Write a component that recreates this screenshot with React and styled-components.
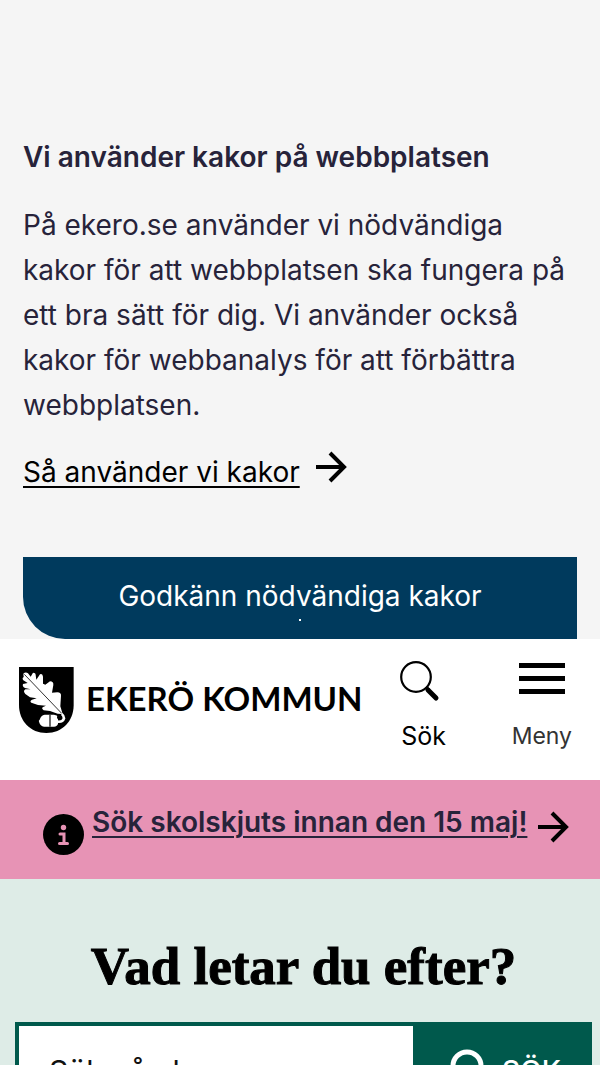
import React from 'react';
import styled, { createGlobalStyle } from 'styled-components';

const colors = {
  banner: '#f5f5f5',
  text: '#27233a',
  blue: '#003a5d',
  pink: '#e793b5',
  mint: '#deece7',
  green: '#00594c',
};

const GlobalStyle = createGlobalStyle`
  * {
    box-sizing: border-box;
  }

  body {
    margin: 0;
    background: #ffffff;
    color: ${colors.text};
    font-family: Inter, "Liberation Sans", sans-serif;
    font-size: 28px;
    line-height: 45px;
  }

  button, input {
    font: inherit;
  }
`;

// --- COOKIE BANNER ---

const CookieBanner = styled.section`
  background: ${colors.banner};
  padding: 135px 23px 0;
`;

const CookieTitle = styled.h2`
  margin: 0 0 23px;
  font-size: 28px;
  font-weight: 600;
  line-height: 45px;
`;

const CookieText = styled.p`
  margin: 0 0 22px;
`;

const CookieLink = styled.a`
  display: flex;
  align-items: flex-start;
  gap: 16px;
  color: #000000;
  text-decoration: none;

  span {
    text-decoration: underline;
    text-decoration-thickness: 2px;
    text-underline-offset: 4px;
  }
`;

const AcceptButton = styled.button`
  display: flex;
  flex-direction: column;
  align-items: center;
  width: 100%;
  margin-top: 62px;
  padding: 17px 0 18px;
  border: 0;
  border-radius: 0 0 0 42px;
  background: ${colors.blue};
  color: #ffffff;
  cursor: pointer;

  &::after {
    content: "";
    width: 2px;
    height: 2px;
    background: #ffffff;
  }
`;

// --- HEADER ---

const Header = styled.header`
  display: flex;
  justify-content: space-between;
  align-items: flex-start;
  padding: 21px 28px 26px 18px;
  background: #ffffff;
  color: #000000;
`;

const Logo = styled.a`
  display: flex;
  align-items: flex-start;
  gap: 12px;
  padding-top: 7px;
  color: #000000;
  font-family: Lato, sans-serif;
  font-size: 33px;
  font-weight: 700;
  line-height: 62px;
  white-space: nowrap;
  text-decoration: none;
`;

const Tools = styled.nav`
  display: flex;
  gap: 64px;
`;

const ToolButton = styled.button`
  display: flex;
  flex-direction: column;
  align-items: center;
  gap: 16px;
  padding: 0;
  border: 0;
  background: none;
  color: ${({ $muted }) => ($muted ? '#333333' : '#000000')};
  font-size: ${({ $muted }) => ($muted ? 23 : 25)}px;
  line-height: 36px;
  cursor: pointer;
`;

// --- ALERT ---

const Alert = styled.aside`
  display: flex;
  align-items: flex-start;
  gap: 8px;
  padding: 20px 31px 24px 43px;
  background: ${colors.pink};

  > svg {
    flex: none;
    margin-top: 14px;
  }
`;

const AlertLink = styled.a`
  display: flex;
  flex: 1;
  justify-content: space-between;
  color: ${colors.text};
  font-weight: 600;
  white-space: nowrap;
  text-decoration: none;

  span {
    text-decoration: underline;
    text-decoration-thickness: 2px;
    text-underline-offset: 4px;
  }
`;

const Arrow = styled.svg`
  flex: none;
  margin-top: ${({ $top }) => $top}px;
`;

// --- SEARCH ---

const Hero = styled.main`
  padding: 53px 8px 64px 15px;
  background: ${colors.mint};
`;

const HeroTitle = styled.h1`
  margin: 0 0 22px;
  color: #000000;
  font-family: "Liberation Serif", serif;
  font-size: 53px;
  font-weight: 700;
  line-height: 68px;
  text-align: center;
  -webkit-text-stroke: 1px #000000;
`;

const SearchForm = styled.form`
  display: flex;
  height: 98px;
  border: 4px solid ${colors.green};
  background: ${colors.green};
`;

const SearchInput = styled.input`
  flex: 1;
  min-width: 0;
  padding: 0 30px;
  border: 0;
  border-radius: 0;
  background: #ffffff;
  color: #111111;
  font-size: 30px;

  &::placeholder {
    color: #111111;
    opacity: 1;
  }
`;

const SearchButton = styled.button`
  display: flex;
  justify-content: center;
  align-items: center;
  gap: 16px;
  width: 175px;
  padding: 0 0 0 10px;
  border: 0;
  background: ${colors.green};
  color: #ffffff;
  font-weight: 500;
  cursor: pointer;
`;

// --- COMPONENTS ---

const ArrowIcon = ({ top }) => (
  <Arrow $top={top} width="31" height="32" viewBox="0 0 31 32" fill="none" stroke="#000000" strokeWidth="4" aria-hidden="true">
    <path d="M0 16h28M14 2l14 14-14 14" />
  </Arrow>
);

// Oak leaf and acorn on a black shield
const Shield = () => (
  <svg width="56" height="66" viewBox="24 36 168 198" aria-hidden="true">
    <path d="M27 36h164v114c0 48-34 84-82 84s-82-36-82-84z" fill="#000000" />
    <path
      d="M40 56Q47 50 54 55L62 65L69 53Q77 53 77 60L79 74L90 58Q98 55 99 65L99 86L106 89L120 79Q131 79 130 90L126 113L142 112Q154 113 153 122L151 154L158 177L143 176L120 168L101 166Q93 160 99 156L108 152L84 150L64 143Q58 138 66 134L80 130L60 127L46 117Q38 108 46 103L62 103L45 99Q36 95 39 87L53 84L40 76Q35 70 41 66Z"
      fill="#ffffff"
    />
    <path d="M43 58L155 175" stroke="#333333" strokeWidth="3" />
    <path d="M104 179h28q10 1 12 7v20q-2 8-12 9h-30q-11-1-15-15-2-3 2-6 4-14 15-15z" fill="#ffffff" />
    <path d="M120 179v36" stroke="#222222" strokeWidth="4" />
    <path d="M143 200q15 2 19-10-1-9-7-13" fill="none" stroke="#ffffff" strokeWidth="8" />
    <circle cx="148" cy="187" r="7" fill="#000000" />
  </svg>
);

const SearchIcon = () => (
  <svg width="48" height="42" viewBox="0 0 48 42" fill="none" stroke="#000000" aria-hidden="true">
    <circle cx="16" cy="17" r="14.800" strokeWidth="2.200" />
    <path d="M26 27l3 3" strokeWidth="3" />
    <path d="M28 30l8 8" strokeWidth="5" strokeLinecap="round" />
  </svg>
);

const MenuIcon = () => (
  <svg width="46" height="42" viewBox="0 0 46 42" fill="#000000" aria-hidden="true">
    <path d="M0 3h46v5H0zM0 16h46v5H0zM0 29h46v5H0z" />
  </svg>
);

const InfoIcon = () => (
  <svg width="41" height="41" viewBox="0 0 41 41" aria-hidden="true">
    <circle cx="20.500" cy="20.500" r="20.500" fill="#000000" />
    <circle cx="20.500" cy="13.500" r="2.700" fill={colors.pink} />
    <path d="M17 20h4v9M16.500 29.500h8" fill="none" stroke={colors.pink} strokeWidth="3" strokeLinecap="round" />
  </svg>
);

const App = () => {
  return (
    <>
      <GlobalStyle />
      <CookieBanner>
        <CookieTitle>Vi använder kakor på webbplatsen</CookieTitle>
        <CookieText>
          På ekero.se använder vi nödvändiga kakor för att webbplatsen ska fungera på ett bra sätt för dig.
          Vi använder också kakor för webbanalys för att förbättra webbplatsen.
        </CookieText>
        <CookieLink href="#">
          <span>Så använder vi kakor</span>
          <ArrowIcon top={1} />
        </CookieLink>
        <AcceptButton type="button">Godkänn nödvändiga kakor</AcceptButton>
      </CookieBanner>

      <Header>
        <Logo href="#">
          <Shield />
          EKERÖ KOMMUN
        </Logo>
        <Tools>
          <ToolButton type="button">
            <SearchIcon />
            Sök
          </ToolButton>
          <ToolButton type="button" $muted>
            <MenuIcon />
            Meny
          </ToolButton>
        </Tools>
      </Header>

      <Alert>
        <InfoIcon />
        <AlertLink href="#">
          <span>Sök skolskjuts innan den 15 maj!</span>
          <ArrowIcon top={11} />
        </AlertLink>
      </Alert>

      <Hero>
        <HeroTitle>Vad letar du efter?</HeroTitle>
        <SearchForm>
          <SearchInput type="text" aria-label="Sök på ekero.se" placeholder="Sök på ekero.se" />
          <SearchButton type="submit">
            <svg width="36" height="44" viewBox="0 0 36 44" fill="none" stroke="#ffffff" strokeWidth="5" aria-hidden="true">
              <circle cx="17" cy="17" r="14" />
              <path d="M27 27l8 8" />
            </svg>
            SÖK
          </SearchButton>
        </SearchForm>
      </Hero>
    </>
  );
};

export default App;
